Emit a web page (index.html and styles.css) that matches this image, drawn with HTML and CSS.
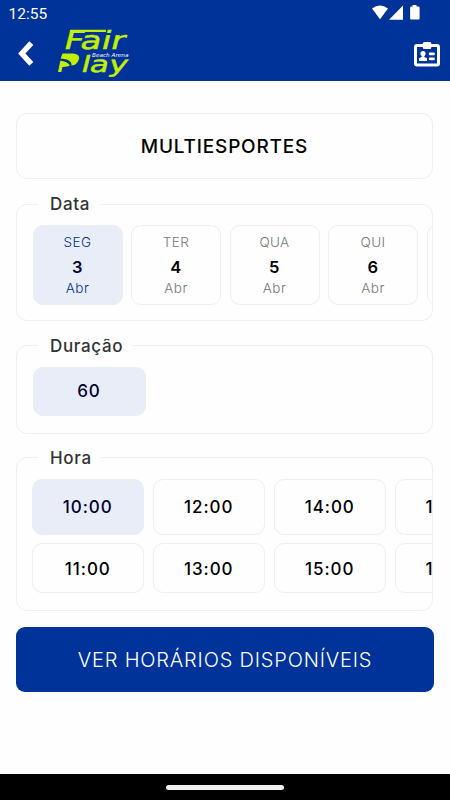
FILE: index.html
```html
<!DOCTYPE html>
<html lang="pt-BR">
<head>
<meta charset="utf-8">
<title>Fair Play Beach Arena</title>
<link rel="stylesheet" href="styles.css">
</head>
<body>
<div class="app">
  <header class="header">
    <div class="status">
      <span class="clock">12:55</span>
      <svg class="status-icons" width="50" height="17" viewBox="0 0 50 17" fill="#fff">
        <path d="M0 3.500Q8 -2.700 16 3.500L8 14.300Z"/>
        <path d="M31 .5V14.700H17Z"/>
        <path d="M40.500 0h4v1.500h2.100q1 0 1 1v11q0 1-1 1h-7.500q-1 0-1-1v-11q0-1 1-1h1.400z"/>
      </svg>
    </div>
    <nav class="nav">
      <svg class="back" width="18" height="26" viewBox="0 0 18 26"><path d="M15.300 2.200L5.800 12.500L15.300 22.800" fill="none" stroke="#fff" stroke-width="5.400"/></svg>
      <svg class="logo" width="76" height="50" viewBox="57 28 76 50">
        <path d="M70 30.800H106" fill="none" stroke="#c3ef00" stroke-width="2.200"/>
        <g class="logo-word">
          <text transform="translate(62.500 48.800) skewX(-14)" font-size="25" textLength="61" lengthAdjust="spacingAndGlyphs">Fair</text>
          <text transform="translate(80 72) skewX(-14)" font-size="22.500" textLength="46" lengthAdjust="spacingAndGlyphs">lay</text>
        </g>
        <path fill="#c3ef00" d="M62.500 53.500H73Q79.500 54 79.200 58.500Q77.500 65 71.500 65.500Q72 61.500 67 59.400L60.600 58.500Z"/>
        <path fill="#c3ef00" d="M60.300 60.700Q67.500 61.500 70 65.300Q68 67 62.500 67L61.300 72H58Z"/>
        <text class="logo-sub" x="92" y="56.500" font-size="5.500" textLength="36.500" lengthAdjust="spacingAndGlyphs" fill="#fff">Beach Arena</text>
      </svg>
      <svg class="badge" width="28" height="26" viewBox="0 0 28 26">
        <rect x="1.500" y="3.500" width="23" height="19.500" rx="1.500" fill="none" stroke="#fff" stroke-width="3"/>
        <rect x="8.800" y="0" width="8.500" height="7" rx="1.500" fill="#fff"/>
        <g fill="#fff"><circle cx="9" cy="11.500" r="2.600"/><path d="M7.700 13h2.600v2l2.700 1.200V19H5v-2.800L7.700 15z"/><rect x="14.800" y="10.500" width="6" height="2.700" rx="1"/><rect x="14.800" y="15.500" width="6" height="2.700" rx="1"/></g>
      </svg>
    </nav>
  </header>
  <main class="content">
    <div class="sport">MULTIESPORTES</div>
    <fieldset class="group dates">
      <legend>Data</legend>
      <div class="scroller">
        <div class="day selected"><span>SEG</span><b>3</b><span>Abr</span></div>
        <div class="day"><span>TER</span><b>4</b><span>Abr</span></div>
        <div class="day"><span>QUA</span><b>5</b><span>Abr</span></div>
        <div class="day"><span>QUI</span><b>6</b><span>Abr</span></div>
        <div class="day"></div>
      </div>
    </fieldset>
    <fieldset class="group duration">
      <legend class="wide">Duração</legend>
      <div class="scroller"><div class="option selected">60</div></div>
    </fieldset>
    <fieldset class="group hours">
      <legend>Hora</legend>
      <div class="scroller">
        <div class="option selected">10:00</div><div class="option">12:00</div><div class="option">14:00</div><div class="option partial">1</div>
        <div class="option">11:00</div><div class="option">13:00</div><div class="option">15:00</div><div class="option partial">1</div>
      </div>
    </fieldset>
    <button class="submit">VER HORÁRIOS DISPONÍVEIS</button>
  </main>
  <footer class="system-bar"><div class="handle"></div></footer>
</div>
</body>
</html>
```
FILE: styles.css
```css
* { box-sizing: border-box; }
body { margin: 0; background: #fefefe; font-family: Inter, "Open Sans", sans-serif; }
.app { width: 450px; height: 800px; display: flex; flex-direction: column; overflow: hidden; }
.header { height: 80.5px; flex: none; background: #003399; color: #fff; }
.status { display: flex; height: 28px; padding: 5px 28px 0 8.500px; justify-content: space-between; }
.clock { font: 15.500px/18px Roboto, sans-serif; }
.status-icons { flex: none; }
.nav { display: flex; height: 50px; padding-left: 16px; }
.back { margin-top: 13px; }
.logo { margin-left: 23px; overflow: visible; }
.logo-word { font-family: "DejaVu Sans", sans-serif; fill: #c3ef00; stroke: #c3ef00; stroke-width: .5px; }
.logo-sub { font-family: "DejaVu Sans", sans-serif; font-style: italic; }
.badge { margin: 13.500px 8px 0 auto; }
.content { flex: 1; padding: 32.500px 17px 0 16px; display: flex; flex-direction: column; }
.sport { height: 66px; flex: none; border: 1px solid #efefef; border-radius: 11px; display: flex; align-items: center; justify-content: center; font-size: 19px; font-weight: 500; letter-spacing: .8px; color: #000; }
.group { flex: none; min-width: 0; margin: 13px 0 0; padding: 0; border: 1px solid #efefef; border-radius: 11px; }
legend { width: 63px; height: 24px; margin-left: 21px; padding: 0 0 0 12px; font-size: 17px; line-height: 24px; font-weight: 500; letter-spacing: .65px; color: #333; white-space: nowrap; }
legend.wide { width: 95px; }
.scroller { overflow: hidden; display: grid; grid-auto-flow: column; justify-content: start; gap: 8.500px; padding: 9px 0 0 15.500px; }
.dates { height: 129px; }
.dates .scroller { grid-auto-columns: 90px; }
.day { height: 80px; border: 1px solid #eee; border-radius: 10px; padding-top: 6px; display: flex; flex-direction: column; align-items: center; color: #777; font-size: 13.500px; font-weight: 300; letter-spacing: .4px; line-height: 20px; }
.day b { font-size: 16.500px; line-height: 30px; margin-bottom: -4px; font-weight: 600; color: #000; }
.day.selected { background: #e9edf7; border-color: #e9edf7; color: #003088; }
.day.selected b { color: #000033; }
.duration { height: 100px; margin-top: 12.500px; }
.option { height: 49.500px; border: 1px solid #eee; border-radius: 10px; display: flex; align-items: center; justify-content: center; font-size: 17px; font-weight: 500; letter-spacing: .95px; color: #000; }
.duration .scroller { grid-auto-columns: 113px; }
.option.selected { background: #e9edf7; border-color: #e9edf7; color: #000033; }
.hours { height: 165px; margin-top: 12px; }
.hours .scroller { grid-auto-flow: row; grid-template-columns: repeat(4, 112.500px); grid-template-rows: 56px 50px; padding-left: 14.500px; }
.hours .option { height: auto; padding-top: 1px; }
.hours .partial { justify-content: flex-start; padding-left: 30px; letter-spacing: 0; }
.submit { width: 418px; height: 65px; flex: none; margin-top: 16.500px; padding: 0; border: 0; border-radius: 9px; background: #003399; color: #fff; font: 300 20px Inter, sans-serif; letter-spacing: .82px; }
.system-bar { height: 26.500px; flex: none; background: #000; display: flex; justify-content: center; padding-top: 11px; }
.handle { width: 118px; height: 5px; border-radius: 3px; background: #f0f0f0; }
```
